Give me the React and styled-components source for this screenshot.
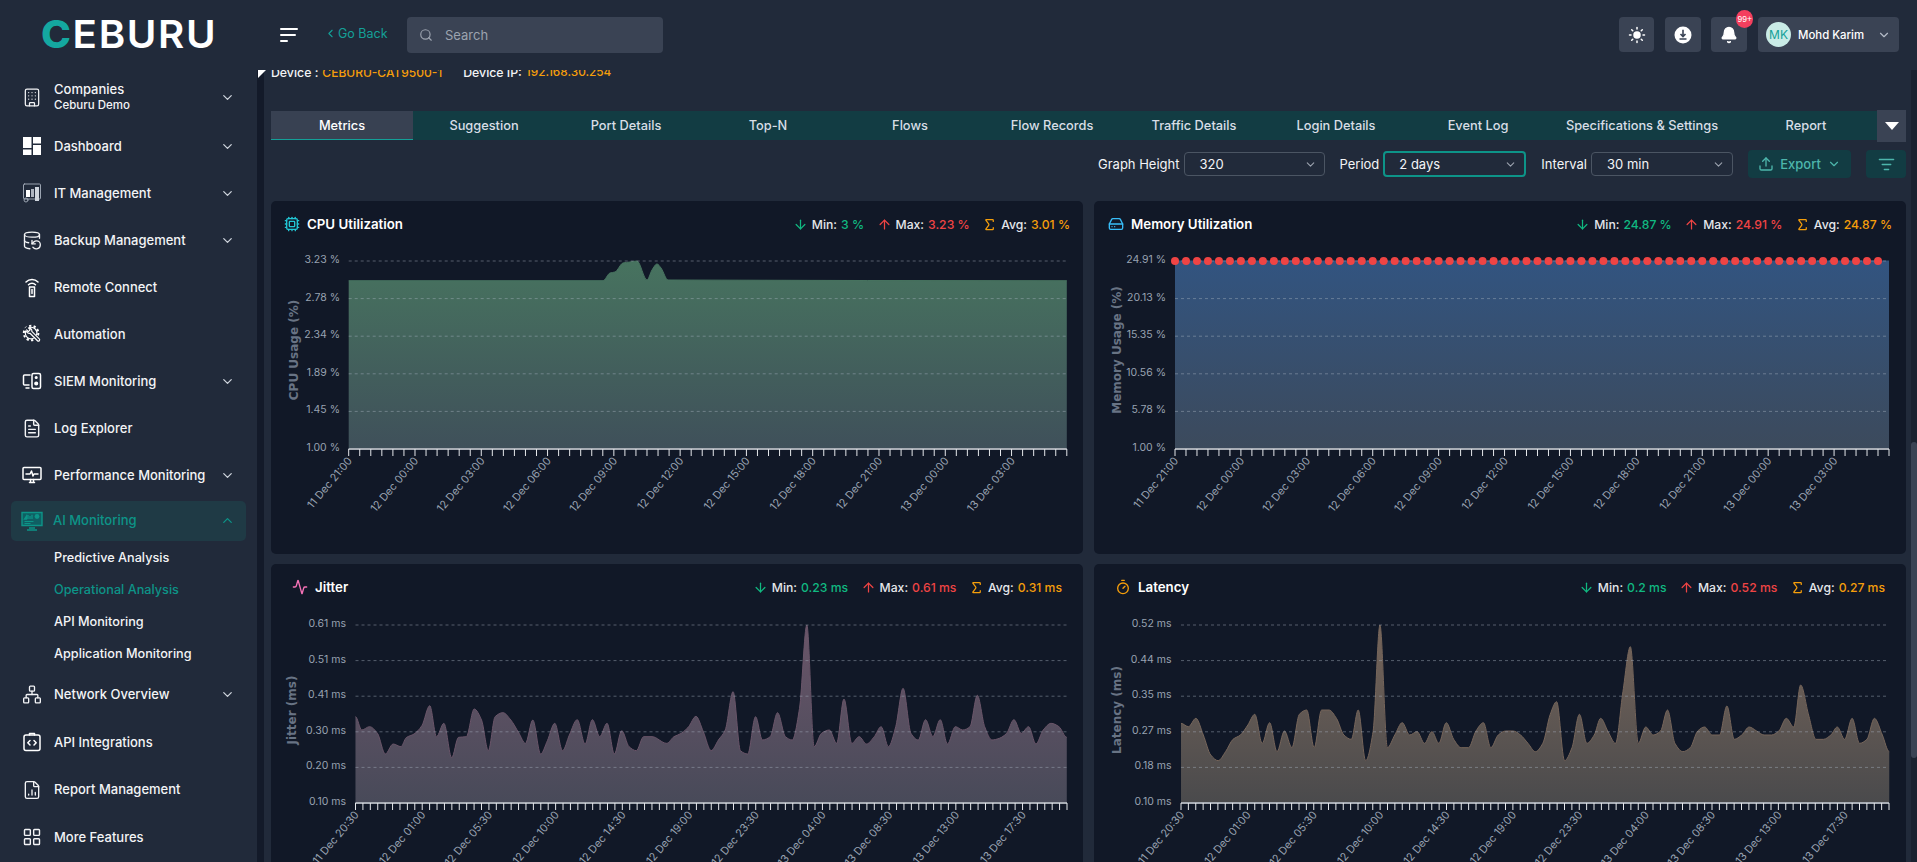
import React from "react";
import styled, { createGlobalStyle } from "styled-components";
import {
  ChevronDown, ChevronUp, ChevronLeft, Building, DatabaseBackup, FileText, Network, FileChartColumn, LayoutGrid,
  Search, Sun, Bell, Upload, ListFilter, ArrowDown, ArrowUp, Sigma, Cpu, HardDrive, Activity, Timer,
} from "lucide-react";

const FONT = `Inter, "Open Sans", "Liberation Sans", sans-serif`;
const TEAL = "#0d9488";

const Global = createGlobalStyle`
  html, body { margin: 0; padding: 0; height: 100%; overflow: hidden; background: #212a3a; }
  * { box-sizing: border-box; }
  body { font-family: ${FONT}; color: #f3f4f6; }
`;

const Shell = styled.div`height: 100vh; display: flex; flex-direction: column; overflow: hidden; background: #212a3a;`;

/* ---------- header ---------- */
const Header = styled.header`height: 70px; flex: none; display: flex; align-items: center; padding: 0 18px 1px 0; position: relative; z-index: 2; background: #212a3a;`;
const LogoBox = styled.div`width: 280px; padding-left: 41px; flex: none;`;
const LogoText = styled.div`width: max-content; font: 600 38.5px/1 ${FONT}; letter-spacing: 1.6px; color: #fff; white-space: nowrap; transform: scaleX(1.045); transform-origin: left center;`;
const LogoC = styled.span`color: #14a8a0; font-weight: 800;`;
const Burger = styled.button`width: 18px; height: 14px; padding: 0; border: 0; background: none; margin-right: 28px; display: flex; flex-direction: column; justify-content: space-between; align-items: flex-start;`;
const BurgerLine = styled.span`display: block; height: 2px; border-radius: 1px; background: #fff; width: ${(p) => p.$w}px;`;
const GoBack = styled.a`display: flex; align-items: center; gap: 1px; flex: none; margin-left: -2px; width: 62px; margin-right: 21px; margin-top: -2px; color: #14a098; font-size: 12.5px; white-space: nowrap; svg { flex: none; }`;
const SearchBox = styled.div`width: 256px; height: 36px; background: #3a4354; border-radius: 4px; display: flex; align-items: center; gap: 12px; padding-left: 12px; color: #9ca3af; font-size: 13px;`;
const Right = styled.div`margin-left: auto; display: flex; align-items: center; gap: 10.7px;`;
const IconBtn = styled.button`position: relative; width: ${(p) => p.$w || 36}px; height: 35px; padding: 0; border: 0; border-radius: 4px; background: #3a4354; display: flex; align-items: center; justify-content: center; color: #fff;`;
const Badge = styled.span`position: absolute; top: -7px; right: -6px; width: 17px; height: 18px; border-radius: 9px; background: #f43f5e; color: #fff; font-size: 8.5px; display: flex; align-items: center; justify-content: center;`;
const UserBox = styled.div`width: 141px; height: 35px; border-radius: 4px; background: #3a4354; display: flex; align-items: center; padding: 0 8px; font-size: 11.4px; font-weight: 500; color: #fff;`;
const Avatar = styled.span`width: 25px; height: 25px; border-radius: 50%; background: #c9ebe6; color: #14a098; font-size: 12px; font-weight: 400; display: flex; align-items: center; justify-content: center; margin-right: 7px; flex: none;`;
const UserChevron = styled(ChevronDown)`margin-left: auto; color: #b5bcc8;`;

/* ---------- sidebar ---------- */
const Body = styled.div`flex: 1; min-height: 0; display: flex;`;
const Sidebar = styled.nav`width: 257px; flex: none; padding-top: 3px; overflow: hidden;`;
const Row = styled.div`height: ${(p) => p.$h || 47}px; margin: 0 11px; padding: 0 11px; display: flex; align-items: center; gap: 12px; font-size: 13px; font-weight: 500; color: #f3f4f6; white-space: nowrap;`;
const ActiveRow = styled(Row)`height: 39.5px; margin-top: 2.5px; padding-left: 10px; gap: 10px; background: #1f3a45; border-radius: 5px; color: ${TEAL};`;
const RowIcon = styled.span`width: 20px; height: 22px; flex: none; display: flex; align-items: center; justify-content: center;`;
const ActiveIcon = styled(RowIcon)`width: 22px;`;
const RowText = styled.div`flex: 1; min-width: 0; line-height: 15px;`;
const RowSub = styled.div`font-size: 11.5px; margin-top: 1px;`;
const SubList = styled.div`padding-top: 1px; margin-bottom: 1px;`;
const SubItem = styled.div`height: 32px; padding-left: 54px; display: flex; align-items: center; font-size: 12.7px; font-weight: 500; color: ${(p) => (p.$on ? TEAL : "#f3f4f6")}; white-space: nowrap;`;

/* ---------- content ---------- */
const Strip = styled.div`width: 7px; flex: none; position: relative; background: #131a29;`;
const Corner = styled.span`position: absolute; left: 1px; top: 0; width: 8px; height: 8px; background: #fff; clip-path: polygon(0 0, 100% 0, 0 100%); z-index: 1;`;
const Content = styled.main`flex: 1; min-width: 0; overflow: hidden; padding: 0 5px 0 7px;`;
const DeviceRow = styled.div`height: 20px; margin-top: -8px; display: flex; align-items: center; font-size: 12.3px; font-weight: 500; color: #f3f4f6;`;
const Orange = styled.span`color: #f59e0b; font-size: ${(p) => p.$fs}px; margin-left: 4px; margin-right: ${(p) => p.$mr || 0}px;`;
const TabBar = styled.div`height: 29px; margin-top: 29px; display: flex; background: #123c43;`;
const Tab = styled.div`flex: 0 0 ${(p) => (p.$wide ? 186 : 142)}px; display: flex; align-items: center; justify-content: center; font-size: 12.8px; font-weight: 500; white-space: nowrap; color: ${(p) => (p.$on ? "#fff" : "#d8dee6")}; background: ${(p) => (p.$on ? "#384152" : "transparent")}; border-bottom: 1.5px solid ${(p) => (p.$on ? "#14a098" : "transparent")};`;
const TabMore = styled.div`flex: 0 0 29px; height: 32px; margin-top: -1px; background: #3a4354; display: flex; align-items: center; justify-content: center;`;
const Tri = styled.span`width: 0; height: 0; border-left: 7px solid transparent; border-right: 7px solid transparent; border-top: 8px solid #fff;`;
const Toolbar = styled.div`height: 28px; margin-top: 10px; display: flex; justify-content: flex-end; align-items: center; gap: 15px;`;
const Field = styled.label`display: flex; align-items: center; gap: 4px; font-size: 13px; white-space: nowrap;`;
const Select = styled.div`width: ${(p) => p.$w}px; height: ${(p) => (p.$on ? 26 : 24)}px; border: ${(p) => (p.$on ? `2px solid ${TEAL}` : "1px solid #4b5563")}; border-radius: 4px; padding: 0 7px 0 ${(p) => (p.$on ? 14 : 15)}px; display: flex; align-items: center; justify-content: space-between; font-size: 13px; color: #f3f4f6;`;
const ExportBtn = styled.button`width: 103px; height: 28px; border: 0; border-radius: 4px; background: #123c43; color: #4db6ac; font: 500 13px ${FONT}; display: flex; align-items: center; justify-content: center; gap: 6px;`;
const FilterBtn = styled.button`width: 40px; height: 28px; border: 0; border-radius: 4px; background: #123c43; color: #4db6ac; display: flex; align-items: center; justify-content: center; padding: 0;`;
const Grid = styled.div`margin-top: 23px; display: grid; grid-template-columns: 812px 812px; gap: 10px 11px;`;
const Card = styled.section`height: 353px; border-radius: 5px; background: #111827; display: flex; flex-direction: column;`;
const CardHead = styled.div`height: 46px; flex: none; display: flex; align-items: center; padding: 0 ${(p) => p.$pr}px 0 ${(p) => p.$pl}px;`;
const CardTitle = styled.h3`margin: 0 0 0 7px; font-size: 13.3px; font-weight: 600; color: #fff;`;
const Stats = styled.div`margin-left: auto; display: flex; align-items: center; gap: 12.5px; font-size: 12.2px; font-weight: 500; color: #e5e7eb;`;
const Stat = styled.span`display: flex; align-items: center; gap: 4px; white-space: nowrap;`;
const StatVal = styled.span`color: ${(p) => p.$c};`;
const ChartSvg = styled.svg`display: block; flex: 1; width: 812px; height: 307px;`;
const Track = styled.div`width: 6px; flex: none; position: relative; background: #1a2230;`;
const Thumb = styled.div`position: absolute; left: 0; right: 0; top: 372px; height: 316px; border-radius: 3px; background: #3a4354;`;

/* ---------- icons ---------- */
const S = { width: 20, height: 20, viewBox: "0 0 20 20", fill: "none", stroke: "#fff", strokeWidth: 1.5, strokeLinecap: "round", strokeLinejoin: "round" };
const DashIcon = () => (
  <svg {...S} stroke="none" fill="#fff"><rect x="1" y="1" width="8.5" height="11" /><rect x="11" y="1" width="8" height="6.5" /><rect x="1" y="13.5" width="8.5" height="5.5" /><rect x="11" y="9" width="8" height="10" /></svg>
);
const ItIcon = () => (
  <svg {...S} stroke="#9aa3b0" strokeWidth="1"><rect x="1.5" y="1" width="17" height="15" rx="1" /><rect x="4" y="7" width="4" height="7" fill="#fff" stroke="none" /><rect x="9" y="6" width="3" height="8" fill="#aeb5c0" stroke="none" /><rect x="13" y="4" width="4" height="14" fill="#cfd5dd" stroke="none" /><circle cx="4" cy="17" r="2" /></svg>
);
const RemoteIcon = () => (
  <svg {...S} width="22" height="22"><path d="M4 5a8.5 8.5 0 0 1 12 0M6.5 7.8a5 5 0 0 1 7 0" /><rect x="7.5" y="10" width="5" height="9.5" /><path d="M10 12.5v4" /></svg>
);
const GearIcon = () => (
  <svg width="22" height="22" viewBox="0 0 22 22" fill="none" stroke="#fff" strokeLinecap="round" strokeLinejoin="round">
    <circle cx="10" cy="10" r="8" strokeWidth="2.2" strokeDasharray="2.5 2.53" strokeLinecap="butt" />
    <circle cx="10" cy="10" r="6.4" strokeWidth="1.3" />
    <path d="M5.5 5.5L20 19.5" stroke="#212a3a" strokeWidth="4.6" />
    <path d="M5 8.2a3 3 0 0 0 3.8 2L17 18.4a1.4 1.4 0 0 0 2-2L10.8 8.2A3 3 0 0 0 7.3 4.6L9 6.4 7 8.4 5.1 6.6" strokeWidth="1.3" />
  </svg>
);
const SiemIcon = () => (
  <svg {...S}><path d="M8 4H2.5a1 1 0 0 0-1 1v8a1 1 0 0 0 1 1H7M4 17h3" /><rect x="10" y="2.5" width="8.5" height="15" rx="1.5" /><circle cx="14.2" cy="12.5" r="1.3" fill="#fff" /><circle cx="14.2" cy="6.5" r=".8" fill="#fff" /></svg>
);
const PerfIcon = () => (
  <svg {...S}><rect x="1" y="2.5" width="18" height="12" rx="1" /><path d="M4 9h4l1.5-3 1.5 5 1-2h4M7.5 17.5h5M8.5 14.5v3M11.5 14.5v3" /></svg>
);
const AiIcon = () => (
  <svg width="22" height="20" viewBox="0 0 22 20" fill="none"><path d="M1 1.5h20v13H1z" stroke={TEAL} strokeWidth="1.4" fill="#0f5f63" /><path d="M3.5 8l2-3v3zM7 8V4M9 8V5M11 8V3.8" stroke={TEAL} strokeWidth="1.3" /><circle cx="16" cy="5.5" r="2.4" fill={TEAL} /><path d="M3.5 10.5h9M3.5 12.5h6" stroke={TEAL} /><path d="M8 17h6M6 19h10" stroke={TEAL} strokeWidth="1.6" /></svg>
);
const ApiIcon = () => (
  <svg {...S}><rect x="2" y="3" width="16" height="15.5" rx="2" /><path d="M7.5 3V1.6h5V3M8 8.5L5.8 10.7 8 13M12 8.5l2.2 2.2L12 13" /></svg>
);
const DownloadIcon = () => (
  <svg width="18" height="18" viewBox="0 0 18 18"><circle cx="9" cy="9" r="8.5" fill="#fff" /><path d="M9 3.8v6.4M6.5 8l2.5 2.6L11.5 8M5.5 13h7" fill="none" stroke="#3a4354" strokeWidth="1.6" /></svg>
);

/* ---------- chart ---------- */
function monotonePath(pts) {
  const n = pts.length;
  const m = pts.map((p, i) => {
    if (i === 0 || i === n - 1) return 0;
    const a = (p[1] - pts[i - 1][1]) / (p[0] - pts[i - 1][0]);
    const b = (pts[i + 1][1] - p[1]) / (pts[i + 1][0] - p[0]);
    return a * b <= 0 ? 0 : (2 * a * b) / (a + b);
  });
  let d = `M${pts[0][0]} ${pts[0][1]}`;
  for (let i = 1; i < n; i++) {
    const h = (pts[i][0] - pts[i - 1][0]) / 3;
    d += `C${pts[i - 1][0] + h} ${pts[i - 1][1] + m[i - 1] * h} ${pts[i][0] - h} ${pts[i][1] - m[i] * h} ${pts[i][0]} ${pts[i][1]}`;
  }
  return d;
}

function Chart({ id, left, right, top, bottom, yLabels, labelEnd, yTitle, titleX, titleY, xLabels, ticks, every, points, from, to, dots }) {
  const step = (right - left) / (ticks - 1);
  const tickXs = Array.from({ length: ticks }, (_, i) => left + i * step);
  const gridStep = (bottom - top) / (yLabels.length - 1);
  const line = monotonePath(points);
  const area = `${line}L${points[points.length - 1][0]} ${bottom}L${points[0][0]} ${bottom}Z`;
  return (
    <ChartSvg viewBox="0 0 812 307" fontFamily={FONT}>
      <defs>
        <linearGradient id={id} x1="0" y1={top} x2="0" y2={bottom} gradientUnits="userSpaceOnUse">
          <stop offset="0" stopColor={from} />
          <stop offset="1" stopColor={to} />
        </linearGradient>
      </defs>
      <path d={area} fill={`url(#${id})`} />
      <path d={line} fill="none" stroke={from} strokeWidth="1" />
      {yLabels.map((l, i) => (
        <g key={l}>
          <line x1={left} x2={right} y1={top + i * gridStep} y2={top + i * gridStep} stroke="#a9b3c2" strokeOpacity=".45" strokeDasharray="3 3" />
          <text x={labelEnd} y={top + i * gridStep + 2} textAnchor="end" fontSize="10.5" fill="#98a2b1">{l}</text>
        </g>
      ))}
      <line x1={left} x2={right} y1={bottom} y2={bottom} stroke="#a8adb5" strokeWidth="2" />
      {tickXs.map((x) => <line key={x} x1={x} x2={x} y1={bottom} y2={bottom + 7} stroke="#e5e7eb" />)}
      {xLabels.map((l, i) => (
        <text key={l} transform={`translate(${left + i * every * step + 4} ${bottom + 12}) rotate(-50)`} textAnchor="end" fontSize="10.8" fill="#98a2b1">{l}</text>
      ))}
      <text transform={`translate(${titleX} ${titleY}) rotate(-90)`} textAnchor="middle" fontSize="12" fontWeight="700" fontFamily="'DejaVu Sans', sans-serif" fill="#687384">{yTitle}</text>
      {dots && tickXs.slice(0, -1).map((x) => <circle key={x} cx={x} cy={top} r="4" fill="#ef4444" />)}
    </ChartSvg>
  );
}

const cpuGlobal = [[348.7, 280.7], [603, 280.7], [610, 273], [615, 272], [623, 263], [630, 262], [637, 261], [647, 280], [652, 270], [657, 264], [661, 268], [668, 280], [1066.8, 280.7]];
const cpu = cpuGlobal.map(([x, y]) => [x - 271, y - 247]);
const mem = [[81, 14], [795, 14]];
const jitterRaw = [173,485,185,525,200,515,215,535,230,597,245,567,260,575,270,548,285,537,300,512,315,452,328,545,342,505,357,608,370,547,385,545,400,462,414,495,427,587,440,485,455,473,470,495,485,533,498,565,512,495,527,597,540,557,554,505,569,587,582,540,597,494,612,567,626,494,640,545,654,505,668,597,682,527,696,575,710,587,724,545,740,545,768,565,782,545,796,535,810,515,824,484,838,530,853,587,867,555,880,525,895,410,909,587,923,597,938,485,951,555,966,545,980,473,995,545,1008,555,1022,460,1036,210,1050,575,1064,535,1079,525,1093,565,1107,432,1122,565,1136,545,1150,567,1165,545,1178,515,1192,575,1206,515,1220,400,1235,535,1249,555,1263,494,1277,545,1291,494,1305,567,1320,515,1334,525,1348,515,1362,421,1376,515,1390,555,1404,550,1418,535,1432,494,1446,535,1460,515,1474,567,1488,525,1503,505,1518,515,1533,547];
const latencyRaw = [181,505,195,515,209,490,223,540,237,600,251,617,265,590,279,553,293,540,307,510,320,478,334,565,348,503,362,590,376,528,390,578,404,478,418,465,432,578,446,465,460,465,474,490,488,540,502,553,515,465,529,617,543,530,556,210,570,578,584,540,598,503,612,540,626,530,640,565,654,530,667,565,681,503,695,553,709,578,723,578,737,528,751,503,765,578,779,540,793,528,807,528,821,540,835,565,849,590,863,565,877,478,889,440,904,617,918,578,932,478,946,565,960,540,972,490,986,530,1000,565,1014,410,1028,275,1043,565,1057,516,1071,540,1085,528,1098,465,1112,565,1127,590,1141,578,1155,528,1168,516,1182,540,1196,540,1210,453,1224,553,1238,540,1252,516,1266,528,1280,540,1294,540,1308,528,1322,490,1336,516,1349,390,1364,480,1378,553,1392,553,1406,540,1418,516,1432,553,1446,490,1460,565,1474,553,1488,490,1503,540,1516,590];
const pairs = (raw, fx, fy) => {
  const out = [];
  for (let i = 0; i < raw.length; i += 2) out.push([fx(raw[i]), fy(raw[i + 1])]);
  return out;
};
const jitter = pairs(jitterRaw, (x) => 265 + x / 1.912 - 271, (y) => 555 + y / 3 - 610);
const latency = pairs(latencyRaw, (x) => 1085 + x / 1.885 - 1094, (y) => 555 + y / 3 - 610);

const xA = ["11 Dec 21:00", "12 Dec 00:00", "12 Dec 03:00", "12 Dec 06:00", "12 Dec 09:00", "12 Dec 12:00", "12 Dec 15:00", "12 Dec 18:00", "12 Dec 21:00", "13 Dec 00:00", "13 Dec 03:00"];
const xB = ["11 Dec 20:30", "12 Dec 01:00", "12 Dec 05:30", "12 Dec 10:00", "12 Dec 14:30", "12 Dec 19:00", "12 Dec 23:30", "13 Dec 04:00", "13 Dec 08:30", "13 Dec 13:00", "13 Dec 17:30"];

const cards = [
  { title: "CPU Utilization", icon: <Cpu size={16} color="#22c7d6" />, pl: 13, pr: 13, min: "3 %", max: "3.23 %", avg: "3.01 %",
    chart: { id: "gCpu", left: 77.7, right: 795.8, top: 14, bottom: 202, labelEnd: 69, titleX: 27, titleY: 103, yTitle: "CPU Usage (%)", yLabels: ["3.23 %", "2.78 %", "2.34 %", "1.89 %", "1.45 %", "1.00 %"], xLabels: xA, ticks: 66, every: 6, points: cpu, from: "#47735f", to: "#3f505a" } },
  { title: "Memory Utilization", icon: <HardDrive size={16} color="#38bdf8" />, pl: 14, pr: 14, min: "24.87 %", max: "24.91 %", avg: "24.87 %",
    chart: { id: "gMem", left: 81, right: 795, top: 14, bottom: 202, labelEnd: 72, titleX: 27, titleY: 103, yTitle: "Memory Usage (%)", yLabels: ["24.91 %", "20.13 %", "15.35 %", "10.56 %", "5.78 %", "1.00 %"], xLabels: xA, ticks: 66, every: 6, points: mem, from: "#325480", to: "#3c4a5c", dots: true } },
  { title: "Jitter", icon: <Activity size={16} color="#f472b6" />, pl: 21, pr: 21, min: "0.23 ms", max: "0.61 ms", avg: "0.31 ms",
    chart: { id: "gJit", left: 84.5, right: 796, top: 15, bottom: 193, labelEnd: 75, titleX: 25, titleY: 100, yTitle: "Jitter (ms)", yLabels: ["0.61 ms", "0.51 ms", "0.41 ms", "0.30 ms", "0.20 ms", "0.10 ms"], xLabels: xB, ticks: 97, every: 9, points: jitter, from: "#6a5569", to: "#484a59" } },
  { title: "Latency", icon: <Timer size={16} color="#f59e0b" />, pl: 21, pr: 21, min: "0.2 ms", max: "0.52 ms", avg: "0.27 ms",
    chart: { id: "gLat", left: 87, right: 795, top: 15, bottom: 193, labelEnd: 77.5, titleX: 27, titleY: 100, yTitle: "Latency (ms)", yLabels: ["0.52 ms", "0.44 ms", "0.35 ms", "0.27 ms", "0.18 ms", "0.10 ms"], xLabels: xB, ticks: 97, every: 9, points: latency, from: "#76655a", to: "#4a4a4c" } },
];

const tabs = ["Metrics", "Suggestion", "Port Details", "Top-N", "Flows", "Flow Records", "Traffic Details", "Login Details", "Event Log", "Specifications & Settings", "Report"];

const Chev = () => <ChevronDown size={15} color="#cfd5dd" />;
const NavRow = ({ icon, label, sub, chev, h }) => (
  <Row $h={h}>
    <RowIcon>{icon}</RowIcon>
    <RowText>{label}{sub && <RowSub>{sub}</RowSub>}</RowText>
    {chev && <Chev />}
  </Row>
);
const Sel = ({ label, value, w, on }) => (
  <Field>{label}<Select $w={w} $on={on}>{value}<ChevronDown size={13} color="#9ca3af" /></Select></Field>
);

export default function App() {
  return (
    <Shell>
      <Global />
      <Header>
        <LogoBox><LogoText><LogoC>C</LogoC>EBURU</LogoText></LogoBox>
        <Burger aria-label="menu"><BurgerLine $w={18} /><BurgerLine $w={16} /><BurgerLine $w={8} /></Burger>
        <GoBack><ChevronLeft size={13} strokeWidth={2} />Go Back</GoBack>
        <SearchBox><Search size={14} />Search</SearchBox>
        <Right>
          <IconBtn $w={34.5}><Sun size={18} fill="#fff" /></IconBtn>
          <IconBtn><DownloadIcon /></IconBtn>
          <IconBtn><Bell size={18} fill="#fff" /><Badge>99+</Badge></IconBtn>
          <UserBox><Avatar>MK</Avatar>Mohd Karim<UserChevron size={14} /></UserBox>
        </Right>
      </Header>
      <Body>
        <Sidebar>
          <NavRow h={49.5} icon={<Building size={21} strokeWidth={1.5} />} label="Companies" sub="Ceburu Demo" chev />
          <NavRow icon={<DashIcon />} label="Dashboard" chev />
          <NavRow icon={<ItIcon />} label="IT Management" chev />
          <NavRow icon={<DatabaseBackup size={21} strokeWidth={1.6} />} label="Backup Management" chev />
          <NavRow icon={<RemoteIcon />} label="Remote Connect" />
          <NavRow icon={<GearIcon />} label="Automation" />
          <NavRow icon={<SiemIcon />} label="SIEM Monitoring" chev />
          <NavRow icon={<FileText size={21} strokeWidth={1.7} />} label="Log Explorer" />
          <NavRow icon={<PerfIcon />} label="Performance Monitoring" chev />
          <ActiveRow>
            <ActiveIcon><AiIcon /></ActiveIcon>
            <RowText>AI Monitoring</RowText>
            <ChevronUp size={15} color={TEAL} />
          </ActiveRow>
          <SubList>
            <SubItem>Predictive Analysis</SubItem>
            <SubItem $on>Operational Analysis</SubItem>
            <SubItem>API Monitoring</SubItem>
            <SubItem>Application Monitoring</SubItem>
          </SubList>
          <NavRow h={47.7} icon={<Network size={21} strokeWidth={1.6} />} label="Network Overview" chev />
          <NavRow h={47.7} icon={<ApiIcon />} label="API Integrations" />
          <NavRow h={47.7} icon={<FileChartColumn size={20} strokeWidth={1.6} />} label="Report Management" />
          <NavRow h={47.7} icon={<LayoutGrid size={20} strokeWidth={1.7} />} label="More Features" />
        </Sidebar>
        <Strip><Corner /></Strip>
        <Content>
          <DeviceRow>Device :<Orange $fs={12} $mr={21}>CEBURU-CAT9500-1</Orange>Device IP:<Orange $fs={11.8}>192.168.30.254</Orange></DeviceRow>
          <TabBar>
            {tabs.map((t, i) => <Tab key={t} $on={i === 0} $wide={t.startsWith("Spec")}>{t}</Tab>)}
            <TabMore><Tri /></TabMore>
          </TabBar>
          <Toolbar>
            <Sel label="Graph Height" value="320" w={141} />
            <Sel label="Period" value="2 days" w={143} on />
            <Sel label="Interval" value="30 min" w={142} />
            <ExportBtn><Upload size={16} />Export<ChevronDown size={14} /></ExportBtn>
            <FilterBtn><ListFilter size={17} /></FilterBtn>
          </Toolbar>
          <Grid>
            {cards.map((c) => (
              <Card key={c.title}>
                <CardHead $pl={c.pl} $pr={c.pr}>
                  {c.icon}
                  <CardTitle>{c.title}</CardTitle>
                  <Stats>
                    <Stat><ArrowDown size={15} color="#10b981" />Min: <StatVal $c="#10b981">{c.min}</StatVal></Stat>
                    <Stat><ArrowUp size={15} color="#ef4444" />Max: <StatVal $c="#ef4444">{c.max}</StatVal></Stat>
                    <Stat><Sigma size={15} color="#f59e0b" />Avg: <StatVal $c="#f59e0b">{c.avg}</StatVal></Stat>
                  </Stats>
                </CardHead>
                <Chart {...c.chart} />
              </Card>
            ))}
          </Grid>
        </Content>
        <Track><Thumb /></Track>
      </Body>
    </Shell>
  );
}
